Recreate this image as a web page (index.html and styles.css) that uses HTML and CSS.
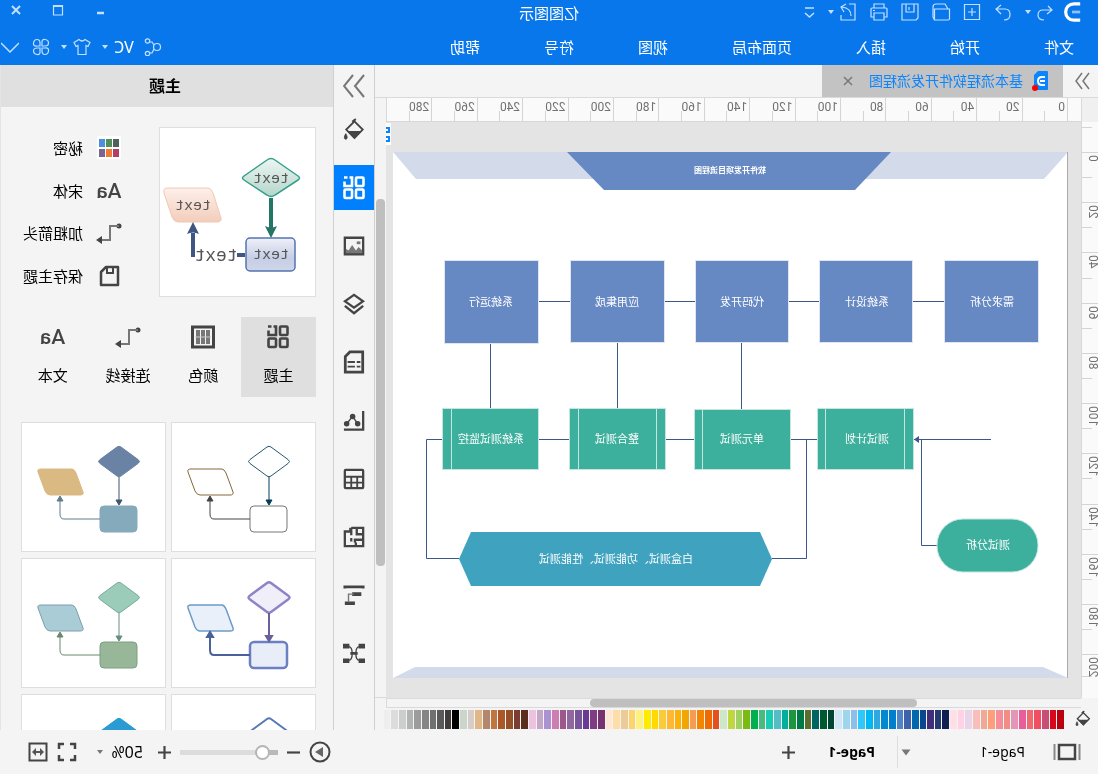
FILE: index.html
```
<!DOCTYPE html>
<html lang="zh-CN">
<head>
<meta charset="utf-8">
<title>亿图图示</title>
<link rel="stylesheet" href="styles.css">
</head>
<body>
<svg class="defs" width="0" height="0" aria-hidden="true">
  <symbol id="caret" viewBox="0 0 8 6"><path d="M1 1h6L4 5z" fill="currentColor"/></symbol>
  <symbol id="bucket" viewBox="0 0 24 26"><path d="M11.500 1.500v2l9 9-9 9-9-9 9-9" fill="none" stroke="currentColor" stroke-width="2"/><path d="M3 14h17l-8.500 9z" fill="currentColor"/><path d="M10 1l4 3" stroke="currentColor" stroke-width="2"/><path d="M21 17c2 3 2 6 0 6s-2-3 0-6" fill="currentColor" stroke="currentColor"/></symbol>
  <symbol id="connector" viewBox="0 0 26 24"><circle cx="3" cy="5" r="2.500" fill="#444"/><path d="M3 5h9v14h9" fill="none" stroke="#777" stroke-width="2"/><path d="M20 15v8l6-4z" fill="#444"/></symbol>
  <symbol id="grid4" viewBox="0 0 22 24"><g fill="none" stroke="currentColor" stroke-width="2.600"><rect x="1.500" y="1.500" width="7.500" height="8.500" rx="1"/><rect x="1.500" y="13.500" width="7.500" height="8.500" rx="1"/><rect x="13" y="13.500" width="7.500" height="8.500" rx="1"/><path d="M15.500 1.500H13V10h7.500V5.500M17.500 1.500h3.500"/></g></symbol>
  <symbol id="theme" viewBox="1 0 143 128">
    <path class="t-dia" d="M45 24q2-1.500 4 0l17 12.500q3 2 0 4L49 53q-2 1.500-4 0L28 40.500q-3-2 0-4z"/>
    <path class="t-para" d="M94 46h31q4 0 3 3l-7 19q-2 4-5 4H86q-4 0-3-3l7-19q2-4 4-4z"/>
    <rect class="t-rect" x="29" y="83" width="37" height="26" rx="4"/>
    <path class="t-line1" d="M47 54v24"/><path class="t-head1" d="M44 77h6l-3 5z"/>
    <path class="t-line2" d="M66 96h36q4 0 4-5V78"/><path class="t-head2" d="M103 78h6l-3-5z"/>
  </symbol>
</svg>

<div class="app">
  <header class="header">
    <div class="title-row">
      <div class="quick">
        <svg class="ico" viewBox="0 0 20 22"><path d="M1 2h7a9 9 0 0 1 0 18H1" stroke="#fff" stroke-width="3.500"/><path d="M1 11h9" stroke="#8cc0ff" stroke-width="3"/></svg>
        <div class="pair first">
          <button aria-label="撤销"><svg class="ico" viewBox="0 0 20 20"><path d="M7 4L3 8l5 4M3 8h9q5 0 5 5t-6 5" /></svg></button>
          <button aria-label="撤销列表"><svg class="caret"><use href="#caret"/></svg></button>
        </div>
        <button aria-label="恢复"><svg class="ico" viewBox="0 0 20 20"><path d="M12 3l5 4-5 5M17 7H8Q3 7 3 12.500T9 18"/></svg></button>
        <button aria-label="新建"><svg class="ico" viewBox="0 0 20 20"><path d="M2.500 2.500h15v15h-15zM10 6v8M6 10h8"/></svg></button>
        <button aria-label="打开"><svg class="ico" viewBox="0 0 20 20"><path d="M1.500 17V7h15v11H3q-1.500 0-1.500-1.500M3 7l3-5h9q3 0 3 3v10l-1.500 3"/></svg></button>
        <button aria-label="保存"><svg class="ico" viewBox="0 0 20 20"><path d="M2 2h16v16H4l-2-2zM6 2v8h8V2M11 5v3"/></svg></button>
        <button aria-label="打印"><svg class="ico" viewBox="0 0 20 20"><path d="M5 6V2h10v4M5 15H2V7q0-1 1-1h14q1 0 1 1v8h-3M5 11h10v7H5zM14 8.500h2"/></svg></button>
        <div class="pair">
          <button aria-label="导出"><svg class="ico" viewBox="0 0 20 20"><path d="M9 2H3v16h14v-5M7 14q0-8 9-9M12 2l5 3-3 5"/></svg></button>
          <button aria-label="导出列表"><svg class="caret"><use href="#caret"/></svg></button>
        </div>
        <button class="more" aria-label="更多"><svg class="ico" viewBox="0 0 20 20"><path d="M6 6h9M6 11l4.500 4 4.500-4" stroke-width="1.500"/></svg></button>
      </div>
      <h1 class="app-title">亿图图示</h1>
      <div class="window-buttons">
        <button aria-label="最小化"><svg viewBox="0 0 12 12"><path d="M2 9h7" stroke-width="2.500"/></svg></button>
        <button aria-label="最大化"><svg viewBox="0 0 12 12"><path d="M1.500 1v10h9V1" /><path d="M1 2h10" stroke-width="2"/></svg></button>
        <button aria-label="关闭"><svg viewBox="0 0 12 12"><path d="M2 2l8 8M10 2l-8 8" stroke-width="2"/></svg></button>
      </div>
    </div>
    <div class="menu-row">
      <nav class="menu">
        <button>文件</button><button>开始</button><button>插入</button><button>页面布局</button><button>视图</button><button>符号</button><button>帮助</button>
      </nav>
      <div class="account">
        <button aria-label="分享"><svg class="ico18" viewBox="0 0 18 18"><circle cx="5" cy="9" r="3.500"/><circle cx="14.500" cy="3" r="2.200"/><circle cx="14.500" cy="15.500" r="2.200"/><path d="M8 7l2-3h2M8 11l2 4h2"/></svg></button>
        <div class="pair wide"><button class="vc">VC</button><svg class="caret"><use href="#caret"/></svg></div>
        <div class="pair wide"><button aria-label="主题皮肤"><svg class="ico18" viewBox="0 0 18 18"><path d="M6 1.500q3 3 6 0l5 3-2 4-2-1v9H5v-9l-2 1-2-4z"/></svg></button><svg class="caret"><use href="#caret"/></svg></div>
        <button aria-label="应用"><svg class="ico18" viewBox="0 0 18 18"><path d="M8 8H5q-3.500 0-3.500-3T5 1.500 8 5zM10 8V5q0-3.500 3-3.500T16.500 5 13 8zM8 10v3q0 3.500-3 3.500T1.500 13 5 10zM10 10h3q3.500 0 3.500 3T13 16.500 10 13z"/></svg></button>
        <button class="fold" aria-label="收起"><svg class="ico18" viewBox="0 0 18 18"><path d="M0 5l9 9 9-9" stroke-width="1.500"/></svg></button>
      </div>
    </div>
  </header>

  <main class="main">
    <section class="workspace">
      <div class="doc-tabs">
        <button class="expand" aria-label="展开"><svg viewBox="0 0 16 18"><path d="M1 1l6 8-6 8M8 1l6 8-6 8"/></svg></button>
        <div class="doc-tab">
          <svg class="doc-icon" viewBox="0 0 18 22"><path d="M3 1h9l4 4v14q0 1-1 1H3q-1 0-1-1V2q0-1 1-1z" fill="#0a84ff"/><path d="M5 7h3q4 0 4 4t-4 4H5M5 11h5" fill="none" stroke="#fff" stroke-width="2"/><circle cx="15" cy="18" r="3" fill="#f00"/></svg>
          <span>基本流程软件开发流程图</span>
          <button aria-label="关闭文档"><svg viewBox="0 0 12 12"><path d="M2 2l8 8M10 2l-8 8"/></svg></button>
        </div>
      </div>
      <div class="stage">
        <div class="corner"></div>
        <div class="ruler-h" id="ruler-h"></div>
        <div class="vscroll"><div class="thumb"></div></div>
        <div class="ruler-v" id="ruler-v"></div>
        <div class="canvas">
          <svg class="page" viewBox="0 0 675 526" role="img" aria-label="软件开发项目流程图">
            <rect width="675" height="526" fill="#fff"/>
            <path d="M0 0h675l-23 27H24z" fill="#d3daea"/>
            <path d="M0 526l25-11h628l22 11z" fill="#d3daea"/>
            <path d="M177 0h324l-37 38H213z" fill="#6688c3"/>
            <path d="M.5 0v526" stroke="#aaa"/>
            <g class="wires">
              <path d="M123 149.500h33M248 149.500h31M372 149.500h32M497 149.500h33"/>
              <path d="M326.500 190v68M450.500 190v67M577.500 191v66"/>
              <path d="M77 287.500h77M250 287.500h28M374 287.500h29M498 287.500h31M625 287.500h16.500v119H609M261.500 287.500v119H296M146.500 287.500v106H131"/>
            </g>
            <path d="M149 284v7l5-3.500z" fill="#3c5788"/>
            <g class="blue">
              <rect x="29.500" y="108.500" width="94" height="82"/><rect x="155.500" y="108.500" width="93" height="82"/><rect x="279.500" y="108.500" width="93" height="82"/><rect x="403.500" y="108.500" width="94" height="82"/><rect x="529.500" y="108.500" width="94" height="83"/>
            </g>
            <g class="green">
              <path d="M154.500 256.500h96v61h-96zM163.500 257v60M242.500 257v60"/>
              <path d="M277.500 257.500h96v60h-96zM365.500 258v59"/>
              <path d="M402.500 256.500h96v61h-96zM411.500 257v60M489.500 257v60"/>
              <path d="M529.500 256.500h96v61h-96zM616.500 257v60"/>
              <rect x="30" y="367" width="101" height="53" rx="26"/>
            </g>
            <path d="M296 407l12-27h289l12 27-12 27H308z" fill="#3fa2bf"/>
            <text class="small" x="338" y="21">软件开发项目流程图</text>
            <g class="labels">
              <text x="76" y="154">需求分析</text><text x="201" y="154">系统设计</text><text x="326" y="154">代码开发</text><text x="451" y="154">应用集成</text><text x="577" y="154">系统运行</text>
              <text x="201" y="291">测试计划</text><text x="326" y="291">单元测试</text><text x="451" y="291">整合测试</text><text x="577" y="291">系统测试监控</text>
              <text x="80" y="397">测试分析</text><text x="452" y="411">白盒测试、功能测试、性能测试</text>
            </g>
          </svg>
          <div class="float-chip"><svg viewBox="0 0 5 20"><path d="M5 4H2v4h3M5 13H2v4h3" fill="none" stroke="#0a84ff" stroke-width="2"/></svg></div>
        </div>
        <div class="hscroll"><div class="thumb"></div></div>
      </div>
      <div class="palette">
        <button aria-label="填充"><svg viewBox="0 0 24 26"><use href="#bucket"/></svg></button>
        <div class="swatches" id="swatches"></div>
      </div>
    </section>

    <nav class="side" aria-label="面板">
      <button class="side-fold" aria-label="收起面板"><svg viewBox="0 0 22 24"><path d="M1 1l9 11-9 11M12 1l9 11-9 11" fill="none" stroke="#777" stroke-width="2"/></svg></button>
      <div class="side-list">
        <button aria-label="填充"><svg viewBox="0 0 24 26"><use href="#bucket"/></svg></button>
        <button class="active" aria-label="主题"><svg viewBox="0 0 22 24"><use href="#grid4"/></svg></button>
        <button aria-label="图片"><svg viewBox="0 0 24 24"><path d="M2 3h20v18H2z" fill="none" stroke="currentColor" stroke-width="2.500"/><path d="M3 20v-3l4-4 3 4 4-6 4 6 3-2v5z" fill="#777"/><path d="M5 7h4v3H5z" fill="#777"/></svg></button>
        <button aria-label="图层"><svg viewBox="0 0 24 24"><path d="M12 2l10 7-10 7L2 9zM2 14l10 8 10-8" fill="none" stroke="currentColor" stroke-width="2.500"/></svg></button>
        <button aria-label="文档"><svg viewBox="0 0 24 26"><path d="M2.500 2h14l5 5v17h-19z" fill="none" stroke="currentColor" stroke-width="3"/><path d="M5 13h4M11 13h8M5 18h4M11 18h8" stroke="currentColor" stroke-width="2"/></svg></button>
        <button aria-label="图表"><svg viewBox="0 0 24 24"><path d="M2 1v20.500h21" fill="none" stroke="currentColor" stroke-width="2.500"/><circle cx="8" cy="15" r="3" fill="currentColor"/><circle cx="13.500" cy="7" r="3" fill="currentColor"/><circle cx="20" cy="15" r="3" fill="currentColor"/><path d="M8 15l5.500-8 6.500 8" fill="none" stroke="currentColor" stroke-width="1.500"/></svg></button>
        <button aria-label="表格"><svg viewBox="0 0 24 24"><rect x="2" y="2" width="20" height="20" rx="1" fill="none" stroke="currentColor" stroke-width="2.500"/><path d="M2 9.500h20M2 16h20M8.500 10v12M15 10v12" stroke="currentColor" stroke-width="2"/></svg></button>
        <button aria-label="平面图"><svg viewBox="0 0 24 24"><path d="M15 2H2v20h20V6h-6V2M15 2v8M9 3v6H3M3 15h8v3M10 18v4M15 13v4" fill="none" stroke="currentColor" stroke-width="2.500"/></svg></button>
        <button aria-label="甘特图"><svg viewBox="0 0 24 24"><path d="M2 5V3h20v2" fill="none" stroke="currentColor" stroke-width="3"/><path d="M4 11h10M11 21h11" stroke="currentColor" stroke-width="4"/><path d="M12 11h6v9" fill="none" stroke="#777" stroke-width="1.500"/></svg></button>
        <button aria-label="思维导图"><svg viewBox="0 0 24 24"><path d="M0 2h7v5H0zM17 2h7v5h-7zM0 18h7v5H0zM17 18h7v5h-7zM8 11h8v3H8z" fill="currentColor"/><path d="M6 5q4 0 4 7.500T6 20M18 5q-4 0-4 7.500t4 7.500" fill="none" stroke="currentColor" stroke-width="1.500"/></svg></button>
      </div>
    </nav>

    <aside class="panel">
      <h2 class="panel-title">主题</h2>
      <div class="panel-body">
        <div class="current">
          <svg class="preview" viewBox="0 0 155 168">
            <defs>
              <linearGradient id="gd" x2="0" y2="1"><stop stop-color="#edf5f2"/><stop offset="1" stop-color="#b5d6cb"/></linearGradient>
              <linearGradient id="gp" x2="0" y2="1"><stop stop-color="#fdf0ea"/><stop offset="1" stop-color="#f3cdbb"/></linearGradient>
              <linearGradient id="gr" x2="0" y2="1"><stop stop-color="#eff1f8"/><stop offset=".6" stop-color="#c6cee5"/><stop offset="1" stop-color="#cfd6ea"/></linearGradient>
            </defs>
            <path d="M40 32q4-3 8 0l23 16q3 2 0 4L48 67q-4 3-8 0L17 52q-3-2 0-4z" fill="url(#gd)" stroke="#32a08a" stroke-width="1.500"/>
            <path d="M107 60h41q4 0 3 5l-8 24q-2 5-6 5H98q-5 0-4-4l8-25q2-5 5-5z" fill="url(#gp)" stroke="#eec8b4"/>
            <rect x="20" y="110" width="49" height="33" rx="4" fill="url(#gr)" stroke="#5474ae" stroke-width="1.500"/>
            <path d="M44 70v32" stroke="#247566" stroke-width="4"/><path d="M38 98q6 3 12 0l-6 12z" fill="#247566"/>
            <path d="M70 127h8M122 129v-24" stroke="#3f5685" stroke-width="4"/><path d="M116 106q6-3 12 0l-6-12z" fill="#3f5685"/>
            <g class="sample"><text x="44" y="55">text</text><text x="122" y="82">text</text><text x="44" y="131">text</text><text class="big" x="99" y="133">text</text></g>
          </svg>
          <div class="actions">
            <button><svg viewBox="0 0 26 24"><path fill="#fff" d="M1 0h24v23H1z"/><path fill="#50605c" d="M3 3h6v8H3z"/><path fill="#518e5a" d="M10 3h6v8h-6z"/><path fill="#4a90dd" d="M17 3h6v8h-6z"/><path fill="#b53d63" d="M3 13h6v8H3z"/><path fill="#f17a35" d="M10 13h6v8h-6z"/><path fill="#7b6590" d="M17 13h6v8h-6z"/></svg>秘密</button>
            <button><span class="aa">Aa</span>宋体</button>
            <button><svg viewBox="0 0 26 24"><use href="#connector"/></svg>加粗箭头</button>
            <button><svg viewBox="0 0 26 24"><path d="M4 3h12l5 5v13H4z" fill="none" stroke="#444" stroke-width="2.500" stroke-linejoin="round"/><path d="M9 3v6h6V3" fill="none" stroke="#444" stroke-width="2"/></svg>保存主题</button>
          </div>
        </div>
        <div class="tabs" role="tablist">
          <button class="on" role="tab"><svg viewBox="0 0 22 24"><use href="#grid4"/></svg>主题</button>
          <button role="tab"><svg viewBox="0 0 26 24"><path d="M2.500 2h21v20h-21z" fill="none" stroke="#444" stroke-width="3"/><path d="M6 5h4v14H6zM11 5h4v14h-4zM16 5h4v14h-4z" fill="#777"/><path d="M5 12h16" stroke="#ccc"/></svg>颜色</button>
          <button role="tab"><svg viewBox="0 0 26 24"><use href="#connector"/></svg>连接线</button>
          <button role="tab"><span class="aa">Aa</span>文本</button>
        </div>
        <div class="cards">
          <button class="card c1" aria-label="主题一"><svg viewBox="0 0 143 128"><use href="#theme"/></svg></button>
          <button class="card c2" aria-label="主题二"><svg viewBox="0 0 143 128"><use href="#theme"/></svg></button>
          <button class="card c3" aria-label="主题三"><svg viewBox="0 0 143 128"><use href="#theme"/></svg></button>
          <button class="card c4" aria-label="主题四"><svg viewBox="0 0 143 128"><use href="#theme"/></svg></button>
          <button class="card c5" aria-label="主题五"><svg viewBox="0 0 143 128"><use href="#theme"/></svg></button>
          <button class="card c6" aria-label="主题六"><svg viewBox="0 0 143 128"><use href="#theme"/></svg></button>
        </div>
      </div>
    </aside>
  </main>

  <footer class="status">
    <div class="pages">
      <button aria-label="页面视图"><svg class="view" viewBox="0 0 28 18"><path d="M1.500 1v16M26.500 1v16" stroke="#888" stroke-width="2"/><path d="M6 2h16v14H6z" fill="none" stroke="#444" stroke-width="2.500"/></svg></button>
      <label class="page-pick"><select aria-label="页面"><option>Page-1</option></select><svg class="caret dark" viewBox="0 0 8 6"><use href="#caret"/></svg></label>
      <button class="page-tab">Page-1</button>
      <button aria-label="添加页面"><svg class="s12" viewBox="0 0 12 12"><path d="M6 0v12M0 6h12" stroke="#444" stroke-width="2"/></svg></button>
    </div>
    <div class="zoom">
      <button aria-label="演示"><svg class="s22" viewBox="0 0 22 22"><circle cx="11" cy="11" r="9.500" fill="none" stroke="#444" stroke-width="2"/><path d="M8 6v10l8-5z" fill="#666"/></svg></button>
      <button aria-label="缩小"><svg class="s12" viewBox="0 0 12 12"><path d="M0 6h12" stroke="#444" stroke-width="2"/></svg></button>
      <input type="range" aria-label="缩放" min="0" max="100" value="10">
      <button aria-label="放大"><svg class="s12" viewBox="0 0 12 12"><path d="M6 0v12M0 6h12" stroke="#444" stroke-width="2"/></svg></button>
      <label class="zoom-pick"><select aria-label="缩放比例"><option>50%</option></select><svg class="caret dark" viewBox="0 0 8 6"><use href="#caret"/></svg></label>
      <button aria-label="全屏"><svg class="s20" viewBox="0 0 20 20"><path d="M2 7V2h5M13 2h5v5M18 13v5h-5M7 18H2v-5" fill="none" stroke="#444" stroke-width="2.500"/></svg></button>
      <button aria-label="适应宽度"><svg class="s20" viewBox="0 0 20 20"><path d="M1.500 1.500h17v17h-17z" fill="none" stroke="#444" stroke-width="2"/><path d="M5 10h10" stroke="#555" stroke-width="2"/><path d="M8 6v8l-4-4zM12 6v8l4-4z" fill="#555"/></svg></button>
    </div>
  </footer>
</div>
<script src="app.js"></script>
</body>
</html>
```
FILE: styles.css
```
* { box-sizing: border-box; }
body { margin: 0; font: 15px/20px "Noto Sans", "Noto Sans CJK SC", sans-serif; color: #000; background: #f4f4f4; overflow: hidden; }
button { border: 0; padding: 0; background: none; color: inherit; font: inherit; display: flex; align-items: center; justify-content: center; }
svg { display: block; flex: none; }
h1, h2 { margin: 0; font-weight: 400; }
.defs { position: absolute; }

/* The whole interface is shown mirrored. */
.app { transform: scaleX(-1); height: 100vh; display: flex; flex-direction: column; }

.header { background: #0977ec; color: #fff; height: 65px; display: flex; flex-direction: column; }
.header svg { fill: none; stroke: #c4e0ff; stroke-width: 1.2; }
.header .caret { stroke: none; color: #c4e0ff; }
.caret { width: 8px; height: 6px; }
.title-row { height: 26px; display: grid; grid-template-columns: 1fr auto 1fr; align-items: center; }
.quick { display: flex; align-items: center; gap: 11px; padding: 0 0 2px 16px; }
.pair { display: flex; align-items: center; gap: 3px; }
.pair.first { margin-left: -4px; }
.pair.wide { gap: 5px; }
.more { margin-left: -4px; }
.ico { width: 20px; height: 20px; }
.ico18 { width: 18px; height: 18px; }
.app-title { font-size: 15px; line-height: 20px; }
.window-buttons { display: flex; justify-content: flex-end; gap: 30px; padding: 0 10px 6px 0; }
.window-buttons svg { width: 12px; height: 12px; }
.menu-row { flex: 1; display: flex; justify-content: space-between; align-items: center; padding: 2px 0 0 24px; }
.menu { display: flex; gap: 64px; }
.account { display: flex; align-items: center; gap: 10px; padding-right: 1px; }
.vc { width: 20px; font-size: 16px; }
.fold { margin-left: 3px; }

.main { flex: 1; min-height: 0; display: grid; grid-template-columns: minmax(0, 1fr) 42px 333px; }
.workspace { display: flex; flex-direction: column; min-height: 0; }
.doc-tabs { height: 32px; display: flex; }
.expand { width: 35px; padding-right: 4px; }
.expand svg { width: 16px; height: 18px; fill: none; stroke: #777; stroke-width: 1.5; }
.doc-tab { background: #c3c3c3; color: #0a84ff; width: 241px; display: flex; align-items: center; gap: 9px; padding: 0 20px 0 13px; font-size: 14px; }
.doc-icon { width: 18px; height: 22px; }
.doc-tab span { flex: 1; white-space: nowrap; }
.doc-tab button svg { width: 12px; height: 12px; fill: none; stroke: #777; stroke-width: 1.5; }

.stage { flex: 1; min-height: 0; display: grid; grid-template-columns: 17px minmax(0, 1fr) 11px; grid-template-rows: 24px minmax(0, 1fr) 10px; border-top: 1px solid #dadada; }
.corner { background: #f0f0f0; border-right: 1px solid #dadada; }
.ruler-h { display: flex; background: #fafafa; padding-left: 13px; border-bottom: 1px solid #d8d8d8; border-right: 1px solid #d8d8d8; }
.ruler-h span { flex: 1; min-width: 0; padding: 2px 0 0 2px; border-left: 1px solid #d4d4d4; background: linear-gradient(#d4d4d4, #d4d4d4) 50% 100% / 1px 10px no-repeat; font: 12px/14px Roboto, sans-serif; color: #707070; }
.ruler-v { display: flex; flex-direction: column; min-height: 0; padding-top: 30px; overflow: hidden; background: linear-gradient(#d4d4d4, #d4d4d4) 100% 5px / 10px 1px no-repeat #fafafa; border-right: 1px solid #d8d8d8; }
.ruler-v span { flex: 100 0 0; min-height: 0; border-top: 1px solid #d4d4d4; background: linear-gradient(#d4d4d4, #d4d4d4) 100% 50% / 10px 1px no-repeat; }
.ruler-v span:last-child { flex-grow: 87; }
.ruler-v b { display: block; writing-mode: vertical-rl; transform: rotate(180deg); font: 12px/10px Roboto, sans-serif; color: #707070; padding-bottom: 2px; }
.vscroll { grid-column: 3; grid-row: 1 / span 2; display: grid; grid-template-rows: 101fr 369fr 131fr; padding: 0 1px; border-bottom: 1px solid #dadada; }
.vscroll .thumb { grid-row: 2; background: #bfbfbf; border-radius: 4px; }
.ruler-v, .canvas { grid-row: 2; }
.canvas { position: relative; background: #e4e4e4; padding: 30px 7px 0 13px; overflow: hidden; }
.page { width: 100%; }
.float-chip { position: absolute; top: 1px; right: 0; width: 5px; height: 22px; background: #fff; display: flex; align-items: center; }
.float-chip svg { width: 5px; height: 20px; }
.hscroll { grid-column: 2; border: 1px solid #dadada; border-left: 0; display: grid; grid-template-columns: 164fr 328fr 203fr; background: #f4f4f4; }
.hscroll .thumb { grid-column: 2; background: #bfbfbf; border-radius: 4px; }
.palette { height: 22px; display: flex; align-items: center; padding-right: 8px; }
.palette > button { width: 34px; padding-right: 4px; color: #444; }
.palette > button svg { width: 16px; height: 18px; }
.swatches { flex: 1; height: 19px; display: flex; gap: 1px; }
.swatches i { flex: 1; }

.wires { fill: none; stroke: #3c5788; }
.blue { fill: #6688c3; stroke: #dfe5f1; }
.green { fill: #3daf9d; stroke: #c4e6df; }
.labels { font-size: 11px; text-anchor: middle; fill: #fff; }
.small { font-size: 8px; font-weight: 700; text-anchor: middle; fill: #fff; }

.side { border: solid #d0d0d0; border-width: 0 1px; display: flex; flex-direction: column; padding-bottom: 54px; color: #444; }
.side svg { width: 22px; height: 24px; }
.side-fold { height: 42px; }
.side-list { flex: 1; display: flex; flex-direction: column; justify-content: space-between; }
.side-list button { height: 45px; }
.side-list .active { background: #0080ff; color: #fff; }

.panel { display: flex; flex-direction: column; min-height: 0; min-width: 0; border-right: 1px solid #e4e4e4; }
.panel-title { height: 42px; flex: none; background: #e0e0e0; font-size: 16px; line-height: 42px; font-weight: 700; text-align: center; padding-left: 4px; }
.panel-body { flex: 1; min-height: 0; overflow: hidden; padding: 20px 20px 0 17px; display: flex; flex-direction: column; }
.current { display: flex; gap: 37px; flex: none; }
.preview { width: 157px; height: 170px; background: #fff; border: 1px solid #dedede; }
.sample { font: 15px "Liberation Mono", monospace; fill: #555; text-anchor: middle; }
.sample .big { font-size: 18px; }
.actions { display: grid; grid-template-rows: repeat(4, 1fr); }
.actions button { justify-content: flex-start; gap: 13px; white-space: nowrap; }
.actions svg { width: 26px; height: 24px; }
.aa { width: 26px; font: 500 21px/24px Roboto, sans-serif; color: #444; text-align: center; }
.tabs { display: grid; grid-template-columns: repeat(4, 1fr); margin: 20px -6px 25px 0; flex: none; }
.tabs button { height: 80px; flex-direction: column; gap: 16px; padding-bottom: 4px; white-space: nowrap; }
.tabs svg { width: 26px; height: 24px; color: #444; }
.tabs .on { background: #dfdfdf; }
.cards { display: grid; grid-template-columns: 1fr 1fr; gap: 6px 5px; flex: none; }
.card { background: #fff; border: 1px solid #dedede; height: 130px; }
.card svg { width: 143px; height: 128px; }

.t-dia { fill: var(--df); stroke: var(--ds); stroke-width: var(--w, 1); }
.t-para { fill: var(--pf); stroke: var(--ps); stroke-width: var(--pw, 1); }
.t-rect { fill: var(--rf); stroke: var(--rs); stroke-width: var(--w, 1); }
.t-line1, .t-line2 { fill: none; stroke-width: var(--lw, 1); }
.t-line1 { stroke: var(--l1); }
.t-line2 { stroke: var(--l2); }
.t-head1 { fill: var(--l1); stroke: var(--l1); stroke-width: var(--lw, 1); }
.t-head2 { fill: var(--l2); stroke: var(--l2); stroke-width: var(--lw, 1); }
.c1 { --df: #fff; --ds: #23576d; --pf: #fff; --ps: #84683a; --rf: #fff; --rs: #777; --l1: #053d58; --l2: #444; }
.c2 { --df: #6a83a5; --ds: #6a83a5; --pf: #dab983; --ps: #dab983; --rf: #84aabc; --rs: #84aabc; --l1: #41546f; --l2: #5f7e8b; }
.c3 { --df: #f0eef9; --ds: #8d84c8; --pf: #eaf0f9; --ps: #6b9bc6; --rf: #e9edf8; --rs: #6b80c2; --l1: #69619c; --l2: #4a629b; --w: 2.5; --pw: 1.5; --lw: 2; }
.c4 { --df: #9bcbb9; --ds: #78ab98; --pf: #a9ccd6; --ps: #7b9fa9; --rf: #98b799; --rs: #7ba080; --l1: #678f80; --l2: #688a6b; }
.c5 { --df: #fff; --ds: #5877b5; --pf: #fff; --ps: #5877b5; --rf: #fff; --rs: #5877b5; --l1: #5877b5; --l2: #5877b5; --w: 2; }
.c6 { --df: #2a9bd3; --ds: #2a9bd3; --pf: #2a9bd3; --ps: #2a9bd3; --rf: #2a9bd3; --rs: #2a9bd3; --l1: #2a9bd3; --l2: #2a9bd3; }

.status { height: 44px; display: flex; justify-content: space-between; align-items: center; font-size: 14px; }
.pages, .zoom { display: flex; align-items: center; }
.pages { padding-left: 17px; }
.view { width: 28px; height: 18px; }
.dark { color: #777; }
select { appearance: none; border: 0; background: none; padding: 0; margin: 0; font: inherit; color: #000; }
.page-pick { display: flex; align-items: center; justify-content: space-between; width: 156px; height: 32px; margin-right: 22px; padding: 0 2px 0 28px; border-right: 1px solid #ddd; }
.page-pick .caret { width: 12px; height: 9px; }
.page-tab { font-weight: 700; margin-right: 33px; }
.s12 { width: 13px; height: 13px; }
.s20 { width: 20px; height: 20px; }
.s22 { width: 22px; height: 22px; }
.zoom { gap: 9px; padding-right: 28px; }
.zoom-pick { display: flex; align-items: center; gap: 7px; margin: 0 10px 0 6px; font-size: 16px; }
input[type=range] { appearance: none; width: 98px; height: 16px; margin: 0; background: linear-gradient(90deg, #b9b9b9 16px, #dcdcdc 16px) 0 50% / 100% 5px no-repeat; }
input[type=range]::-webkit-slider-thumb { appearance: none; width: 15px; height: 15px; border-radius: 8px; border: 2px solid #b5b5b5; background: #fff; }
```
FILE: app.js
```
const swatches = (
  "b80010 d7071c c94e76 f14f61 ee6a70 e85d9b e496b6 f08d85 f48e99 ff9e79 efa994 f7bebb ead4e8 ffd2e4 ffe0e7 " +
  "0f2050 223a70 442d78 08488e 0068ac 3f62ad 5383c7 007fcc 0089d1 2da9e0 00b6f3 30c8fa 8bc0ea 9fd6ed d0e8f6 " +
  "004434 005830 006562 596e2f 007a44 1c963f 00af9e 55bdc5 18cdb1 4abb7f 00b050 7cba12 a0d061 c0d741 cce8c9 " +
  "e5501f ed6b00 f38500 f49c55 f2a601 fcb209 ffb833 facb38 ffd900 ffeb00 fdf180 fdd36b ebcb97 ffdda9 fde9d2 " +
  "773270 7f3e83 683a94 775599 9167a0 9b5889 cd7db1 aa93d0 c4a6cb edc2dd 5a2d1c 7a3d30 965029 ab5728 c0763f " +
  "b3866e e0b887 d6ccc8 cad5cc 000000 413b3c 595959 707070 858585 9b9d9d b2b4b4 cccdcd dcdcdc eeeeee"
).split(" ");

document.getElementById("swatches").innerHTML =
  swatches.map(c => `<i style="background:#${c}"></i>`).join("");

document.getElementById("ruler-h").innerHTML =
  Array.from({ length: 15 }, (_, i) => `<span>${i * 20}</span>`).join("");

document.getElementById("ruler-v").innerHTML =
  Array.from({ length: 11 }, (_, i) => `<span><b>${i * 20}</b></span>`).join("");
```
